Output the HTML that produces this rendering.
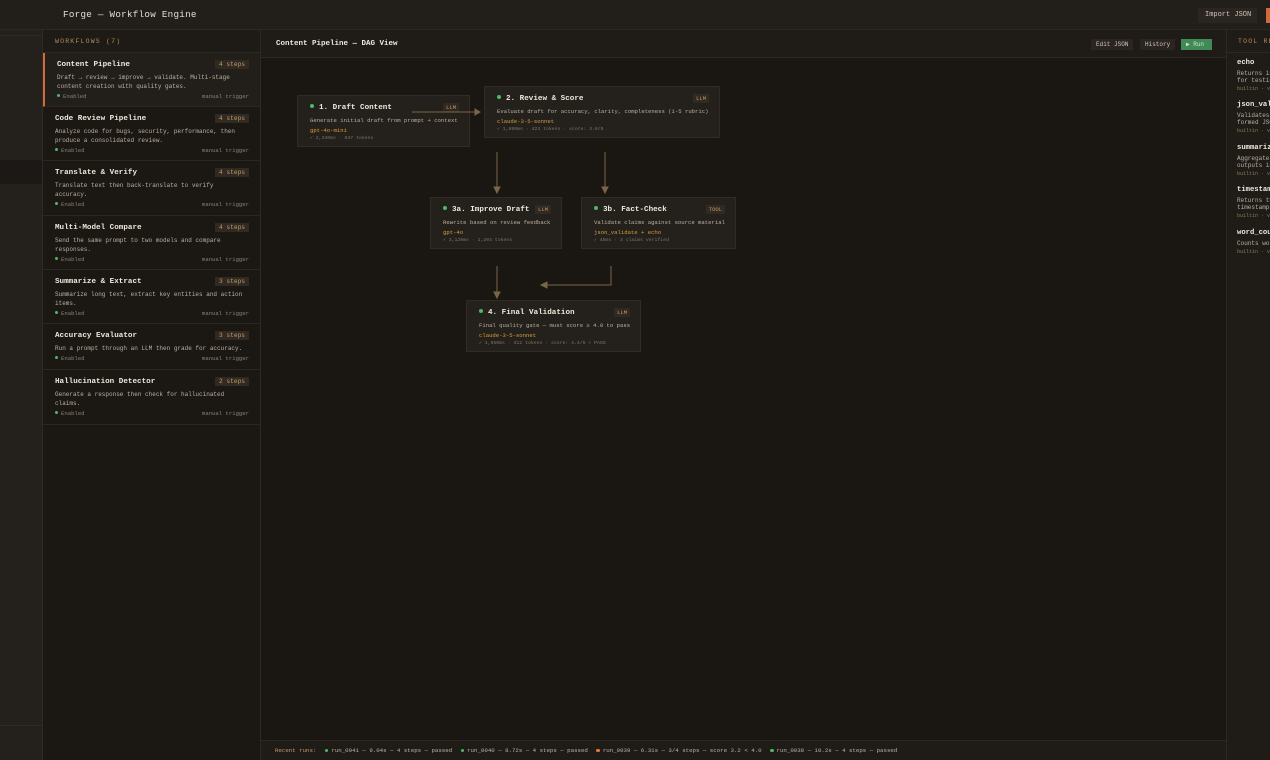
<!DOCTYPE html>
<html><head><meta charset="utf-8"><style>
*{margin:0;padding:0;box-sizing:border-box}
body{width:1270px;height:760px;overflow:hidden;background:#1a1612;font-family:"Liberation Mono",monospace;color:#d8d0c4;position:relative}
.abs{position:absolute}
.top{left:0;top:0;width:1270px;height:30px;background:#221f1b;border-bottom:1px solid #2c2823}
.strip{left:0;top:30px;width:43px;height:730px;background:#24211d;border-right:1px solid #2e2a25}
.wf{left:43px;top:30px;width:218px;height:730px;background:#1b1713;border-right:1px solid #2c2823}
.wfh{height:23px;border-bottom:1px solid #2c2823;background:#1e1b17;font-size:6.5px;letter-spacing:1.2px;color:#b08a5a;padding:8px 12px}
.card{position:absolute;left:0;width:217px;border-bottom:1px solid #2a2621;padding:0 12px}
.card.sel{background:#221f1b;border-left:2px solid #d2693a}
.ct{position:absolute;left:12px;top:8px;font-size:7.6px;font-weight:bold;color:#efe8dc}
.badge{position:absolute;right:11px;top:7px;background:#302a22;color:#c49a6a;font-size:6.2px;padding:1px 4px}
.cd{position:absolute;left:12px;top:20px;width:190px;font-size:6px;line-height:9px;color:#b9b0a4}
.cf{position:absolute;left:12px;right:11px;font-size:5.6px;color:#8a8276}
.cf i{display:inline-block;width:3px;height:3px;border-radius:50%;background:#4cb86a;margin-right:3px;vertical-align:1px}
.cf span{float:right}
.mh{left:261px;top:30px;width:965px;height:28px;background:#1f1c18;border-bottom:1px solid #2c2823}
.btn{position:absolute;top:9px;height:11px;font-size:6px;padding:2px 5px;background:#2a2520;color:#cfc6b8;white-space:nowrap}
.node{position:absolute;background:#24201b;border:1px solid #302b25}
.nt{position:absolute;left:12px;top:8px;font-size:7.6px;font-weight:bold;color:#efe8dc;white-space:nowrap}
.nt i{display:inline-block;width:4px;height:4px;border-radius:50%;background:#4cb86a;margin-right:5px;vertical-align:1px}
.nb{position:absolute;right:10px;top:7px;background:#302a22;color:#c49a6a;font-size:5.5px;padding:1px 3px}
.nd{position:absolute;left:12px;top:21px;font-size:5.6px;color:#b9b0a4;white-space:nowrap}
.nm{position:absolute;left:12px;top:31px;font-size:5.6px;color:#d4a03a}
.ns{position:absolute;left:12px;top:40px;font-size:4.8px;color:#7e766a;white-space:nowrap}
.right{left:1226px;top:30px;width:44px;height:730px;background:#1f1c18;border-left:1px solid #2c2823;overflow:hidden}
.tool{position:absolute;left:10px;width:200px}
.tool b{display:block;font-size:7.2px;color:#efe8dc}
.tool p{font-size:6px;color:#b9b0a4;line-height:7px;margin-top:3px}
.tool s{display:block;text-decoration:none;font-size:5px;color:#8a7a5a;margin-top:2px}
.bot{left:261px;top:740px;width:965px;height:20px;background:#1f1c18;border-top:1px solid #2c2823;font-size:5.75px;color:#b9b0a4;padding:6px 14px;white-space:nowrap}
.bot i{display:inline-block;width:3.5px;height:3.5px;border-radius:50%;background:#4cb86a;margin:0 3px 0 5px;vertical-align:0}
</style></head><body>
<div class="abs top"><div class="abs" style="left:63px;top:9px;font-size:9.2px;color:#e6ded2;letter-spacing:.3px">Forge — Workflow Engine</div>
<div class="abs" style="left:1198px;top:8px;width:59px;height:15px;background:#2a2520;font-size:7px;color:#cfc6b8;padding:3px 7px;white-space:nowrap">Import JSON</div>
<div class="abs" style="left:1266px;top:8px;width:4px;height:15px;background:#d2693a"></div></div>
<div class="abs strip"><div class="abs" style="left:0;top:5px;width:42px;border-top:1px solid #2e2a25"></div><div class="abs" style="left:0;top:130px;width:42px;height:24px;background:#1b1815"></div><div class="abs" style="left:0;top:695px;width:42px;border-top:1px solid #2e2a25"></div></div>
<div class="abs wf"><div class="wfh">WORKFLOWS (7)</div>
<div class="card sel" style="top:23px;height:54px"><div class="ct">Content Pipeline</div><div class="badge">4 steps</div><div class="cd">Draft → review → improve → validate. Multi-stage content creation with quality gates.</div><div class="cf" style="top:40px"><i></i>Enabled<span>manual trigger</span></div></div>
<div class="card" style="top:77px;height:54px"><div class="ct">Code Review Pipeline</div><div class="badge">4 steps</div><div class="cd">Analyze code for bugs, security, performance, then produce a consolidated review.</div><div class="cf" style="top:40px"><i></i>Enabled<span>manual trigger</span></div></div>
<div class="card" style="top:131px;height:55px"><div class="ct">Translate &amp; Verify</div><div class="badge">4 steps</div><div class="cd">Translate text then back-translate to verify accuracy.</div><div class="cf" style="top:40px"><i></i>Enabled<span>manual trigger</span></div></div>
<div class="card" style="top:186px;height:54px"><div class="ct">Multi-Model Compare</div><div class="badge">4 steps</div><div class="cd">Send the same prompt to two models and compare responses.</div><div class="cf" style="top:40px"><i></i>Enabled<span>manual trigger</span></div></div>
<div class="card" style="top:240px;height:54px"><div class="ct">Summarize &amp; Extract</div><div class="badge">3 steps</div><div class="cd">Summarize long text, extract key entities and action items.</div><div class="cf" style="top:40px"><i></i>Enabled<span>manual trigger</span></div></div>
<div class="card" style="top:294px;height:46px"><div class="ct">Accuracy Evaluator</div><div class="badge">3 steps</div><div class="cd">Run a prompt through an LLM then grade for accuracy.</div><div class="cf" style="top:31px"><i></i>Enabled<span>manual trigger</span></div></div>
<div class="card" style="top:340px;height:55px"><div class="ct">Hallucination Detector</div><div class="badge">2 steps</div><div class="cd">Generate a response then check for hallucinated claims.</div><div class="cf" style="top:40px"><i></i>Enabled<span>manual trigger</span></div></div>
</div>
<div class="abs mh"><div class="abs" style="left:15px;top:10px;font-size:7.5px;font-weight:bold;color:#efe8dc">Content Pipeline — DAG View</div>
<div class="btn" style="left:830px">Edit JSON</div><div class="btn" style="left:879px">History</div><div class="btn" style="left:920px;background:#3f8a55;color:#cfe8d4;width:31px">▶ Run</div></div>
<div class="node" style="left:297px;top:95px;width:173px;height:52px"><div class="nt"><i></i>1. Draft Content</div><div class="nb">LLM</div><div class="nd">Generate initial draft from prompt + context</div><div class="nm">gpt-4o-mini</div><div class="ns">✓ 2,340ms · 847 tokens</div></div>
<div class="node" style="left:484px;top:86px;width:236px;height:52px"><div class="nt"><i></i>2. Review &amp; Score</div><div class="nb">LLM</div><div class="nd">Evaluate draft for accuracy, clarity, completeness (1-5 rubric)</div><div class="nm">claude-3-5-sonnet</div><div class="ns">✓ 1,890ms · 423 tokens · score: 3.8/5</div></div>
<div class="node" style="left:430px;top:197px;width:132px;height:52px"><div class="nt"><i></i>3a. Improve Draft</div><div class="nb">LLM</div><div class="nd">Rewrite based on review feedback</div><div class="nm">gpt-4o</div><div class="ns">✓ 3,120ms · 1,204 tokens</div></div>
<div class="node" style="left:581px;top:197px;width:155px;height:52px"><div class="nt"><i></i>3b. Fact-Check</div><div class="nb">TOOL</div><div class="nd">Validate claims against source material</div><div class="nm">json_validate + echo</div><div class="ns">✓ 45ms · 3 claims verified</div></div>
<div class="node" style="left:466px;top:300px;width:175px;height:52px"><div class="nt"><i></i>4. Final Validation</div><div class="nb">LLM</div><div class="nd">Final quality gate — must score ≥ 4.0 to pass</div><div class="nm">claude-3-5-sonnet</div><div class="ns">✓ 1,650ms · 312 tokens · score: 4.4/5 ✓ PASS</div></div>
<svg class="abs" style="left:0;top:0;pointer-events:none" width="1270" height="760"><g stroke="#7a6548" stroke-width="1" fill="#7a6548">
<line x1="412" y1="112" x2="476" y2="112"/><polygon points="480,112 475,109 475,115"/>
<line x1="497" y1="152" x2="497" y2="188"/><polygon points="497,193 494,187 500,187"/>
<line x1="605" y1="152" x2="605" y2="188"/><polygon points="605,193 602,187 608,187"/>
<line x1="497" y1="266" x2="497" y2="293"/><polygon points="497,298 494,292 500,292"/>
<polyline fill="none" points="611,266 611,285 546,285"/><polygon points="541,285 547,282 547,288"/></g></svg>
<div class="abs right"><div class="abs" style="left:11px;top:8px;font-size:6.5px;letter-spacing:1.2px;color:#b08a5a;white-space:nowrap">TOOL REGISTRY</div><div class="abs" style="left:0;top:22px;width:44px;border-top:1px solid #2c2823"></div>
<div class="tool" style="top:29px"><b>echo</b><p>Returns input unchanged<br>for testing</p><s>builtin · v1</s></div>
<div class="tool" style="top:71px"><b>json_validate</b><p>Validates well-<br>formed JSON</p><s>builtin · v1</s></div>
<div class="tool" style="top:114px"><b>summarize</b><p>Aggregates step<br>outputs into</p><s>builtin · v1</s></div>
<div class="tool" style="top:156px"><b>timestamp</b><p>Returns the current<br>timestamp</p><s>builtin · v1</s></div>
<div class="tool" style="top:199px"><b>word_count</b><p>Counts words</p><s>builtin · v1</s></div>
</div>
<div class="abs bot"><span style="color:#c49a6a">Recent runs:</span> <i></i>run_0041 — 9.04s — 4 steps — passed <i></i>run_0040 — 8.72s — 4 steps — passed <i style="background:#e07a3a"></i>run_0039 — 6.31s — 3/4 steps — score 3.2 &lt; 4.0 <i></i>run_0038 — 10.2s — 4 steps — passed</div>
</body></html>
